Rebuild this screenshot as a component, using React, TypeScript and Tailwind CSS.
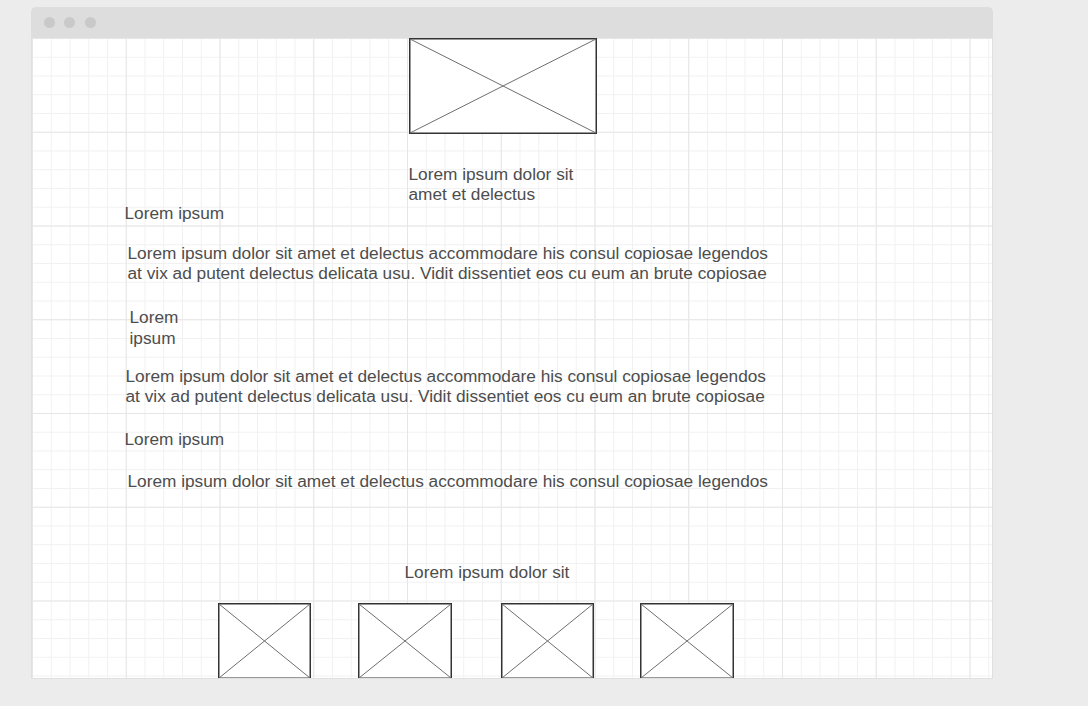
import React from "react";

function Placeholder({ w, h }: { w: number; h: number }) {
  return (
    <svg width={w} height={h} viewBox={`0 0 ${w} ${h}`} className="block shrink-0">
      <rect x={0.75} y={0.75} width={w - 1.5} height={h - 1.5} fill="#ffffff" stroke="#333333" strokeWidth={1.5} />
      <line x1={1} y1={1} x2={w - 1} y2={h - 1} stroke="#6e6e6e" strokeWidth={1} />
      <line x1={w - 1} y1={1} x2={1} y2={h - 1} stroke="#6e6e6e" strokeWidth={1} />
    </svg>
  );
}

export default function App() {
  return (
    <div className="w-[1088px] h-[706px] bg-[#ececec] pt-[7px] pl-[31px] overflow-hidden font-['Liberation_Sans','Helvetica',Arial,sans-serif] text-[#4d4d4d]">
      <div className="w-[962px] h-[672px] flex flex-col rounded-t-[5px] overflow-hidden">
        <div className="h-[30.5px] bg-[#dddddd] flex items-center gap-[9.5px] pl-[12.5px] shrink-0">
          <span className="w-[11px] h-[11px] rounded-full bg-[#c9c9c9]" />
          <span className="w-[11px] h-[11px] rounded-full bg-[#c9c9c9]" />
          <span className="w-[11px] h-[11px] rounded-full bg-[#c9c9c9]" />
        </div>
        <div className="flex-1 bg-white border-x border-b border-[#e0e0e0] bg-[linear-gradient(to_right,#e6e6e6_1px,transparent_1px),linear-gradient(to_bottom,#e6e6e6_1px,transparent_1px),linear-gradient(to_right,#f1f1f1_1px,transparent_1px),linear-gradient(to_bottom,#f1f1f1_1px,transparent_1px)] bg-[size:93.75px_93.75px,93.75px_93.75px,18.75px_18.75px,18.75px_18.75px] flex flex-col text-[17.25px] leading-[20px] overflow-hidden">
          <div className="ml-[377px] mt-[0.5px]">
            <Placeholder w={188} h={96} />
          </div>
          <p className="ml-[376.5px] mt-[29.5px]">
            Lorem ipsum dolor sit
            <br />
            amet et delectus
          </p>
          <p className="ml-[92.5px] mt-[-1px]">Lorem ipsum</p>
          <p className="ml-[95.5px] mt-[20px] whitespace-nowrap">
            Lorem ipsum dolor sit amet et delectus accommodare his consul copiosae legendos
            <br />
            at vix ad putent delectus delicata usu. Vidit dissentiet eos cu eum an brute copiosae
          </p>
          <p className="ml-[97.5px] mt-[24px] leading-[21px]">
            Lorem
            <br />
            ipsum
          </p>
          <p className="ml-[93.5px] mt-[17px] whitespace-nowrap">
            Lorem ipsum dolor sit amet et delectus accommodare his consul copiosae legendos
            <br />
            at vix ad putent delectus delicata usu. Vidit dissentiet eos cu eum an brute copiosae
          </p>
          <p className="ml-[92.5px] mt-[23px]">Lorem ipsum</p>
          <p className="ml-[95.5px] mt-[22px] whitespace-nowrap">
            Lorem ipsum dolor sit amet et delectus accommodare his consul copiosae legendos
          </p>
          <p className="ml-[372.5px] mt-[71px]">Lorem ipsum dolor sit</p>
          <div className="flex mt-[21.5px] ml-[186px]">
            <Placeholder w={93} h={76} />
            <div className="ml-[47px]">
              <Placeholder w={94} h={76} />
            </div>
            <div className="ml-[49px]">
              <Placeholder w={93} h={76} />
            </div>
            <div className="ml-[46px]">
              <Placeholder w={94} h={76} />
            </div>
          </div>
        </div>
      </div>
    </div>
  );
}
